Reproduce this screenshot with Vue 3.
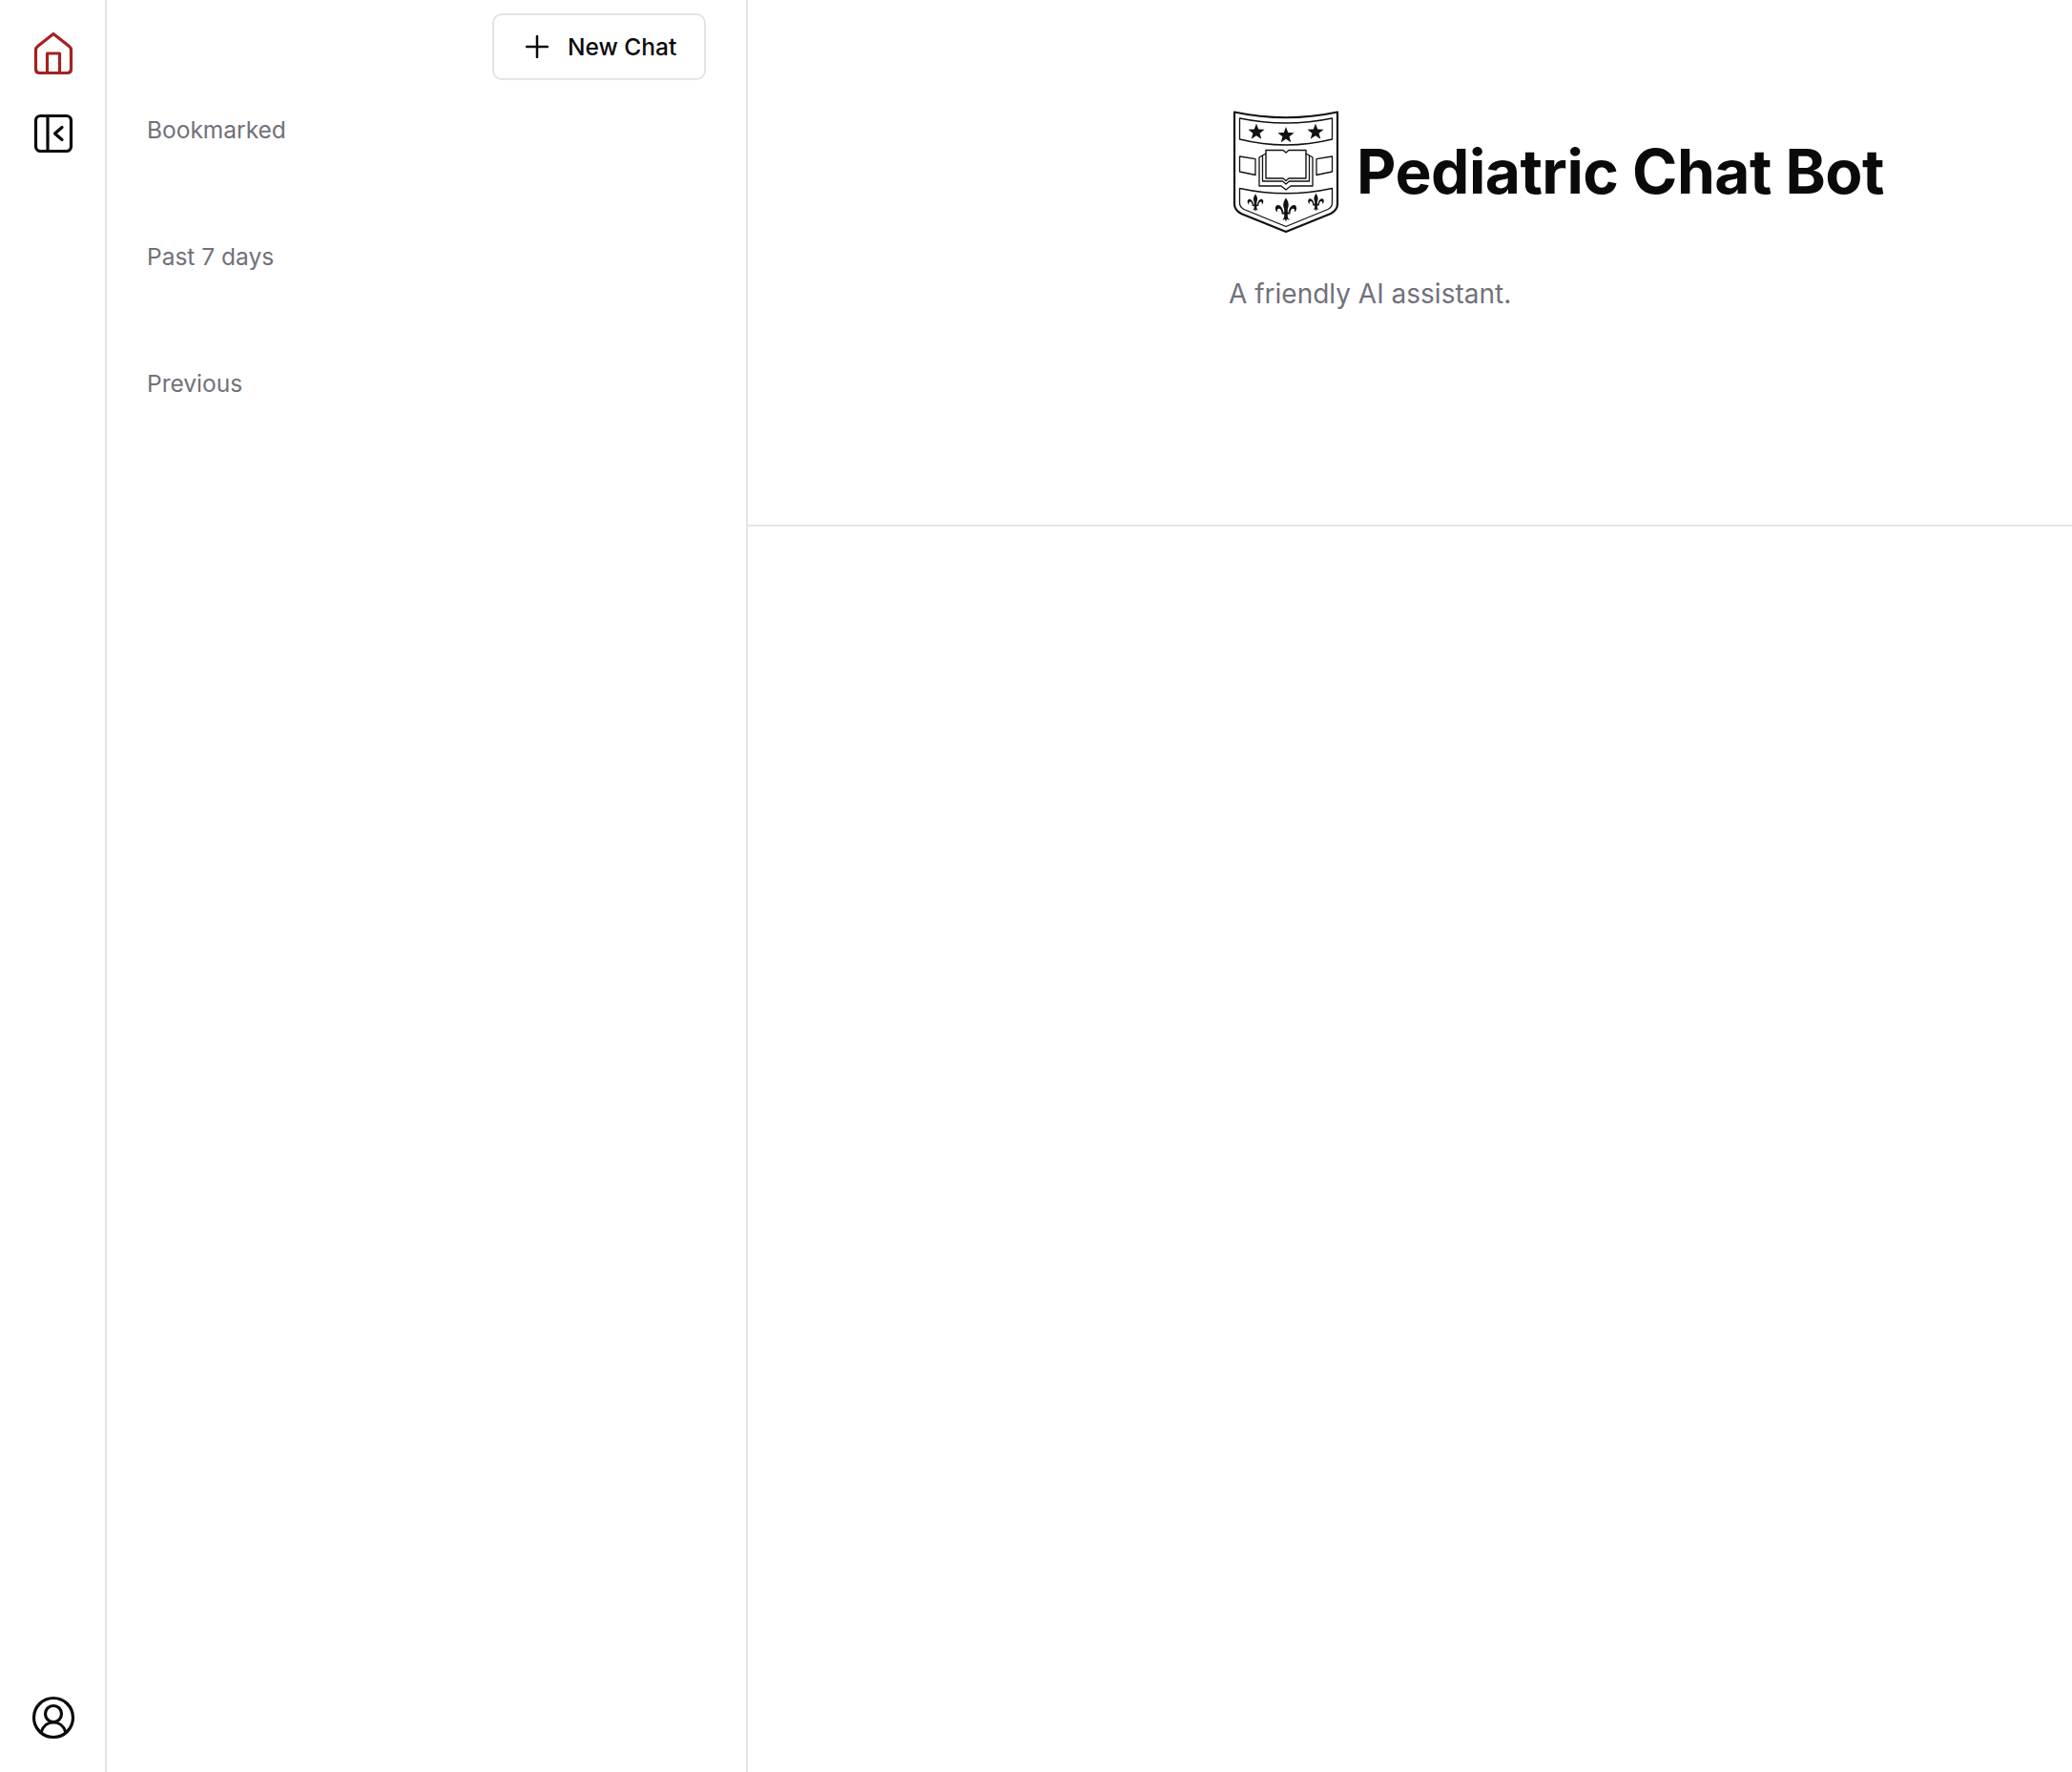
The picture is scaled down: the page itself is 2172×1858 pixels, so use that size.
<script setup>
const sections = ['Bookmarked', 'Past 7 days', 'Previous'];

const starPoints = (cx, cy, r) => {
	const pts = [];
	for (let i = 0; i < 10; i++) {
		const radius = i % 2 === 0 ? r : r * 0.42;
		const angle = (Math.PI / 5) * i - Math.PI / 2;
		pts.push(`${(cx + radius * Math.cos(angle)).toFixed(2)},${(cy + radius * Math.sin(angle)).toFixed(2)}`);
	}
	return pts.join(' ');
};

const stars = [
	starPoints(25, 22.5, 9),
	starPoints(56, 26, 9),
	starPoints(87, 22.5, 9),
];

const fleurs = [
	{ x: 24, y: 96.5, s: 0.75 },
	{ x: 56, y: 104, s: 1 },
	{ x: 87.5, y: 96, s: 0.75 },
];
</script>

<template>
	<div class="page">
		<nav class="rail">
			<div class="rail-top">
				<svg class="rail-icon" viewBox="0 0 48 48" fill="none" stroke="#a32222" stroke-width="3.2" stroke-linejoin="round" stroke-linecap="round">
					<path d="M24 3.5 L7.5 16.5 Q5.5 18 5.5 20.5 V40.5 Q5.5 44.5 9.5 44.5 H38.5 Q42.5 44.5 42.5 40.5 V20.5 Q42.5 18 40.5 16.5 Z" />
					<path d="M17.5 44.5 V24 H30.5 V44.5" />
				</svg>
				<svg class="rail-icon" viewBox="0 0 48 48" fill="none" stroke="#0a0a0a" stroke-width="3.2" stroke-linejoin="round" stroke-linecap="round">
					<rect x="5.5" y="5.5" width="37" height="37" rx="5" />
					<path d="M18 5.5 V42.5" />
					<path d="M33 17.5 L25.5 24 L33 30.5" />
				</svg>
			</div>
			<svg class="rail-icon" viewBox="0 0 48 48" fill="none" stroke="#0a0a0a" stroke-width="3.2" stroke-linecap="round">
				<circle cx="24" cy="24" r="20.5" />
				<circle cx="24" cy="20" r="8.5" />
				<path d="M11 39.5 C13 33 18 29 24 29 C30 29 35 33 37 39.5" />
			</svg>
		</nav>

		<aside class="sidebar">
			<button class="new-chat">
				<svg class="plus" viewBox="0 0 24 24" fill="none" stroke="#0a0a0a" stroke-width="2.5" stroke-linecap="round">
					<path d="M12 1 V23 M1 12 H23" />
				</svg>
				<span>New Chat</span>
			</button>
			<div class="sections">
				<div v-for="section in sections" :key="section" class="section-label">{{ section }}</div>
			</div>
		</aside>

		<main class="main">
			<header class="hero">
				<div class="title-row">
					<svg class="crest" viewBox="0 0 112 130" fill="none" stroke="#111" stroke-linejoin="round">
						<path stroke-width="2.2" d="M2 1.5 Q56 13 110 1.5 V98 Q110 104 103 108 L56 127 L9 108 Q2 104 2 98 Z" />
						<path stroke-width="1.3" d="M7.5 8 Q56 18 104.5 8 V30 Q56 42 7.5 30 Z" />
						<polygon v-for="(pts, i) in stars" :key="i" :points="pts" fill="#111" stroke="none" />
						<path stroke-width="1.3" d="M7.5 48 L24 50.7 V67.5 L7.5 64 Z" />
						<path stroke-width="1.3" d="M88 50.7 L104.5 48 V64 L88 67.5 Z" />
						<path stroke-width="1.4" d="M35 41.5 H53 L56 44 L59 41.5 H77 V71 H59 L56 73.5 L53 71 H35 Z" />
						<path stroke-width="1.3" d="M35 45 L31.5 47 V74 H52.5 L56 77 L59.5 74 H80.5 V47 L77 45" />
						<path stroke-width="1.3" d="M31.5 47 L28 49 V79 H51 L56 83 L61 79 H84 V49 L80.5 47" />
						<path stroke-width="1.3" d="M7.5 81.5 Q56 92 104.5 81.5 V97 Q104.5 101 100 103.5 L56 121.5 L12 103.5 Q7.5 101 7.5 97 Z" />
						<g v-for="(f, i) in fleurs" :key="'f' + i" :transform="`translate(${f.x} ${f.y}) scale(${f.s})`" fill="#111" stroke="none">
							<path d="M0 -12.5 C3.2 -8 3.4 -4.5 1.8 -1 V2.5 H4.5 V4.5 H1.8 V7.5 L3.6 11 L1 9.8 L0 12.5 L-1 9.8 L-3.6 11 L-1.8 7.5 V4.5 H-4.5 V2.5 H-1.8 V-1 C-3.4 -4.5 -3.2 -8 0 -12.5 Z" />
							<path d="M2.6 2.5 C3.4 -2.6 6.8 -6 9.4 -4.7 C11.9 -3.4 11.5 0.9 8.9 2.6 C9.8 -0.4 8.1 -2.1 6.4 -0.9 C5.1 0.2 4.7 1.3 4.7 2.5 Z" />
							<path d="M-2.6 2.5 C-3.4 -2.6 -6.8 -6 -9.4 -4.7 C-11.9 -3.4 -11.5 0.9 -8.9 2.6 C-9.8 -0.4 -8.1 -2.1 -6.4 -0.9 C-5.1 0.2 -4.7 1.3 -4.7 2.5 Z" />
						</g>
					</svg>
					<h1 class="title">Pediatric Chat Bot</h1>
				</div>
				<p class="subtitle">A friendly AI assistant.</p>
			</header>
		</main>
	</div>
</template>

<style scoped>
.page {
	display: flex;
	height: 100vh;
	overflow: hidden;
	background: #fff;
	font-family: Inter, "Liberation Sans", sans-serif;
}

.rail {
	width: 112px;
	box-sizing: border-box;
	flex-shrink: 0;
	display: flex;
	flex-direction: column;
	justify-content: space-between;
	align-items: center;
	padding: 32px 0 33px 2px;
	border-right: 2px solid #e4e4e7;
}

.rail-top {
	display: flex;
	flex-direction: column;
	gap: 36px;
}

.rail-icon {
	display: block;
	width: 48px;
	height: 48px;
}

.sidebar {
	width: 672px;
	box-sizing: border-box;
	flex-shrink: 0;
	display: flex;
	flex-direction: column;
	padding: 14px 42px 0 42px;
	border-right: 2px solid #e4e4e7;
}

.new-chat {
	align-self: flex-end;
	display: flex;
	align-items: center;
	gap: 20px;
	width: 224px;
	height: 70px;
	box-sizing: border-box;
	padding: 0 0 0 33px;
	background: #fff;
	border: 2px solid #e4e4e7;
	border-radius: 10px;
	font-family: inherit;
	font-size: 24.5px;
	font-weight: 500;
	color: #0a0a0a;
}

.plus {
	width: 24px;
	height: 24px;
	flex-shrink: 0;
}

.sections {
	display: flex;
	flex-direction: column;
	gap: 103px;
	margin-top: 37px;
}

.section-label {
	height: 30px;
	line-height: 30px;
	font-size: 24.5px;
	color: #71717a;
}

.main {
	flex: 1;
	min-width: 0;
}

.hero {
	height: 552px;
	box-sizing: border-box;
	padding: 116px 0 0 504px;
	border-bottom: 2px solid #e4e4e7;
}

.title-row {
	display: flex;
	align-items: center;
	gap: 18px;
	padding-left: 4px;
}

.crest {
	width: 112px;
	height: 130px;
	flex-shrink: 0;
}

.title {
	margin: 0 0 2px;
	font-size: 64px;
	font-weight: 700;
	letter-spacing: -0.5px;
	line-height: 72px;
	color: #0a0a0a;
}

.subtitle {
	margin: 44px 0 0;
	font-size: 28px;
	line-height: 36px;
	color: #71717a;
}
</style>
